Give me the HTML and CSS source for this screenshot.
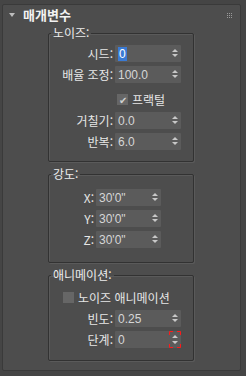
FILE: index.html
```html
<!DOCTYPE html>
<html lang="ko">
<head>
  <meta charset="UTF-8">
  <title>매개변수</title>
  <link rel="stylesheet" href="styles.css">
</head>
<body>
  <!-- Rollout panel -->
  <div class="rollout">
    <div class="rollout-head">
      <span class="arrow"></span>
      <span class="rollout-title">매개변수</span>
      <span class="grip"><i></i><i></i><i></i><i></i><i></i><i></i><i></i><i></i><i></i></span>
    </div>

    <!-- Noise -->
    <fieldset class="group group-noise">
      <legend>노이즈:</legend>
      <div class="row">
        <label class="lbl">시드:</label>
        <div class="spinner"><span class="val"><span class="sel">0</span></span><span class="arrows"></span></div>
      </div>
      <div class="row">
        <label class="lbl">배율 조정:</label>
        <div class="spinner"><span class="val">100.0</span><span class="arrows"></span></div>
      </div>
      <div class="row row-check">
        <span class="check checked">&#10004;</span>
        <span class="check-text">프랙털</span>
      </div>
      <div class="row">
        <label class="lbl">거칠기:</label>
        <div class="spinner"><span class="val">0.0</span><span class="arrows"></span></div>
      </div>
      <div class="row">
        <label class="lbl">반복:</label>
        <div class="spinner"><span class="val">6.0</span><span class="arrows"></span></div>
      </div>
    </fieldset>

    <!-- Strength -->
    <fieldset class="group group-strength">
      <legend>강도:</legend>
      <div class="row">
        <label class="lbl lbl-short">X:</label>
        <div class="spinner spinner-short"><span class="val">30'0"</span><span class="arrows"></span></div>
      </div>
      <div class="row">
        <label class="lbl lbl-short">Y:</label>
        <div class="spinner spinner-short"><span class="val">30'0"</span><span class="arrows"></span></div>
      </div>
      <div class="row">
        <label class="lbl lbl-short">Z:</label>
        <div class="spinner spinner-short"><span class="val">30'0"</span><span class="arrows"></span></div>
      </div>
    </fieldset>

    <!-- Animation -->
    <fieldset class="group group-anim">
      <legend>애니메이션:</legend>
      <div class="row row-check row-check-left">
        <span class="check"></span>
        <span class="check-text">노이즈 애니메이션</span>
      </div>
      <div class="row">
        <label class="lbl">빈도:</label>
        <div class="spinner"><span class="val">0.25</span><span class="arrows"></span></div>
      </div>
      <div class="row">
        <label class="lbl">단계:</label>
        <div class="spinner">
          <span class="val">0</span>
          <svg class="focus-arrows" width="12" height="17" viewBox="0 0 12 17">
            <path d="M0.5 4V0.5H4M8 0.5H11.5V4M11.5 13V16.5H8M4 16.5H0.5V13" fill="none" stroke="#ff1a1a"/>
            <path d="M3 7L6 4L9 7Z M3 10L6 13L9 10Z" fill="#c8c8c8"/>
          </svg>
        </div>
      </div>
    </fieldset>
  </div>
</body>
</html>
```

FILE: styles.css
```css
body {
  margin: 0;
  background: #454545;
  font-family: "Noto Sans CJK KR", "Noto Sans", sans-serif;
  font-size: 12px;
  color: #e6e6e6;
  width: 246px;
  height: 376px;
  overflow: hidden;
}

.rollout {
  margin: 4px 5px 0 2px;
  height: 365px;
  background: #4d4d4d;
  border: 1px solid #3a3a3a;
  border-radius: 2px;
}

.rollout-head {
  display: flex;
  align-items: center;
  height: 20px;
  padding-left: 6px;
}

.arrow {
  width: 0;
  height: 0;
  border-left: 3px solid transparent;
  border-right: 3px solid transparent;
  border-top: 4px solid #bdbdbd;
  margin-right: 8px;
}

.rollout-title {
  font-weight: bold;
  font-size: 13px;
  line-height: 14px;
  color: #f2f2f2;
}

.grip {
  margin-left: auto;
  margin-right: 7px;
  width: 6px;
  display: grid;
  grid-template-columns: repeat(3, 1px);
  gap: 1px;
}

.grip i {
  width: 1px;
  height: 1px;
  background: #9a9a9a;
}

.group {
  margin: 0 0 0 45px;
  width: 144px;
  padding: 0;
  border: 1px solid #323232;
  border-radius: 2px;
  box-shadow: 1px 1px 0 #5a5a5a, inset 1px 1px 0 #5a5a5a;
}

.group legend {
  padding: 0 2px;
  margin-left: 2px;
  line-height: 14px;
  color: #ececec;
}

.group-noise {
  margin-top: 1px;
  padding-top: 5px;
  padding-bottom: 11px;
}

.group-strength {
  margin-top: 5px;
  padding-top: 8px;
  padding-bottom: 14px;
}

.group-anim {
  margin-top: 5px;
  padding-top: 7px;
  padding-bottom: 12px;
}

.row {
  display: flex;
  align-items: center;
  height: 17px;
  margin-bottom: 4px;
}

.row:last-child {
  margin-bottom: 0;
}

.lbl {
  width: 66px;
  text-align: right;
  padding-right: 2px;
  box-sizing: border-box;
  line-height: 14px;
}

.lbl-short {
  width: 47px;
}

.spinner {
  width: 66px;
  height: 17px;
  background: #5b5b5b;
  border-radius: 1px;
  display: flex;
  align-items: center;
}

.spinner-short {
  width: 65px;
}

.val {
  flex: 1;
  padding-left: 3px;
  color: #d6d6d6;
  font-family: "Liberation Sans", Arial, sans-serif;
  font-size: 12px;
  line-height: 14px;
}

.sel {
  background: #3a7ad4;
  color: #ffffff;
  padding: 0 1px;
}

.arrows {
  width: 12px;
  height: 17px;
  position: relative;
}

.arrows::before,
.arrows::after {
  content: "";
  position: absolute;
  left: 3px;
  border-left: 3px solid transparent;
  border-right: 3px solid transparent;
}

.arrows::before {
  top: 4px;
  border-bottom: 3px solid #c8c8c8;
}

.arrows::after {
  top: 9px;
  border-top: 3px solid #c8c8c8;
}

.focus-arrows {
  display: block;
  flex: none;
}

.row-check {
  padding-left: 68px;
  margin-top: 8px;
}

.row-check-left {
  padding-left: 14px;
  margin-top: 0;
}

.check {
  width: 11px;
  height: 11px;
  background: #666666;
  color: #d0d0d0;
  font-size: 10px;
  line-height: 11px;
  text-align: center;
  margin-right: 4px;
}

.check-text {
  line-height: 14px;
}
```
